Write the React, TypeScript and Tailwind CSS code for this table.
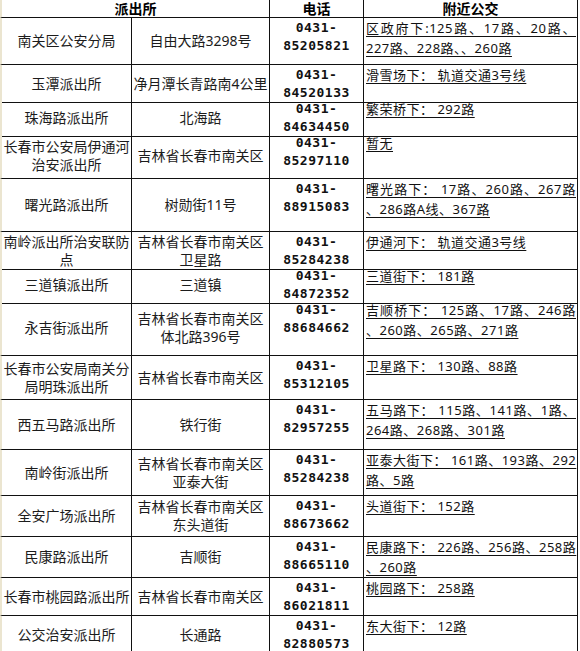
type Row = {
  h: string
  name: string[]
  addr: string[]
  tel: string
  bus: string[]
}

const rows: Row[] = [
  { h: 'h-[47px]', name: ['南关区公安分局'], addr: ['自由大路3298号'], tel: '85205821', bus: ['区政府下:125路、17路、20路、', '227路、228路、、260路'] },
  { h: 'h-[34px]', name: ['玉潭派出所'], addr: ['净月潭长青路南4公里'], tel: '84520133', bus: ['滑雪场下： 轨道交通3号线'] },
  { h: 'h-[34px]', name: ['珠海路派出所'], addr: ['北海路'], tel: '84634450', bus: ['繁荣桥下： 292路'] },
  { h: 'h-[46px]', name: ['长春市公安局伊通河', '治安派出所'], addr: ['吉林省长春市南关区'], tel: '85297110', bus: ['暂无'] },
  { h: 'h-[53px]', name: ['曙光路派出所'], addr: ['树勋街11号'], tel: '88915083', bus: ['曙光路下： 17路、260路、267路', '、286路A线、367路'] },
  { h: 'h-[34px]', name: ['南岭派出所治安联防', '点'], addr: ['吉林省长春市南关区', '卫星路'], tel: '85284238', bus: ['伊通河下： 轨道交通3号线'] },
  { h: 'h-[34px]', name: ['三道镇派出所'], addr: ['三道镇'], tel: '84872352', bus: ['三道街下： 181路'] },
  { h: 'h-[56px]', name: ['永吉街派出所'], addr: ['吉林省长春市南关区', '体北路396号'], tel: '88684662', bus: ['吉顺桥下： 125路、17路、246路', '、260路、265路、271路'] },
  { h: 'h-[44px]', name: ['长春市公安局南关分', '局明珠派出所'], addr: ['吉林省长春市南关区'], tel: '85312105', bus: ['卫星路下： 130路、88路'] },
  { h: 'h-[50px]', name: ['西五马路派出所'], addr: ['铁行街'], tel: '82957255', bus: ['五马路下： 115路、141路、1路、', '264路、268路、301路'] },
  { h: 'h-[46px]', name: ['南岭街派出所'], addr: ['吉林省长春市南关区', '亚泰大街'], tel: '85284238', bus: ['亚泰大街下： 161路、193路、292', '路、5路'] },
  { h: 'h-[41px]', name: ['全安广场派出所'], addr: ['吉林省长春市南关区', '东头道街'], tel: '88673662', bus: ['头道街下： 152路'] },
  { h: 'h-[41px]', name: ['民康路派出所'], addr: ['吉顺街'], tel: '88665110', bus: ['民康路下： 226路、256路、258路', '、260路'] },
  { h: 'h-[38px]', name: ['长春市桃园路派出所'], addr: ['吉林省长春市南关区'], tel: '86021811', bus: ['桃园路下： 258路'] },
  { h: 'h-[34px]', name: ['公交治安派出所'], addr: ['长通路'], tel: '82880573', bus: ['东大街下： 12路'] },
]

const grid = 'grid grid-cols-[132px_138px_94px_214px]'
const cjk = "font-['Noto_Sans','Noto_Sans_CJK_SC',sans-serif]"

function Lines({ lines }: { lines: string[] }) {
  return (
    <div className="text-center text-[14px] leading-[18px] text-[#1c1c1c]">
      {lines.map((l) => (
        <div key={l} className="whitespace-nowrap">
          {l}
        </div>
      ))}
    </div>
  )
}

export default function App() {
  return (
    <div className={`w-[580px] h-[651px] bg-white ${cjk}`}>
      <div className="w-[578px]">
        <div className={`${grid} h-[18px] font-bold text-[14px] leading-[17px] text-black`}>
          <div className="col-span-2 flex items-center justify-center border-l-2 border-l-[#ebe5d0] border-r border-b border-[#111]">
            派出所
          </div>
          <div className="flex items-center justify-center border-r border-b border-[#111]">电话</div>
          <div className="flex items-center justify-center border-r border-b border-[#111]">附近公交</div>
        </div>

        {rows.map((r, i) => (
          <div key={i} className={`${grid} ${r.h}`}>
            <div className="flex items-center justify-center overflow-visible border-l-2 border-l-[#ebe5d0] border-r border-b border-[#111]">
              <Lines lines={r.name} />
            </div>
            <div className="flex items-center justify-center overflow-visible border-r border-b border-[#111]">
              <Lines lines={r.addr} />
            </div>
            <div className="pt-px border-r border-b border-[#111] text-center font-['DejaVu_Sans_Mono',monospace] font-bold text-[13px] tracking-[0.5px] leading-[18px] text-[#111]">
              <div>0431-</div>
              <div>{r.tel}</div>
            </div>
            <div className="pl-[2px] pr-px border-r border-b border-[#111] text-[13px] leading-[20px] tracking-[0.5px] text-[#111]">
              {r.bus.map((l, j) => (
                <div
                  key={j}
                  className={`whitespace-nowrap ${r.bus.length > 1 && j === 0 ? 'text-justify [text-align-last:justify]' : ''}`}
                >
                  <span className="underline underline-offset-[3px] decoration-1">{l}</span>
                </div>
              ))}
            </div>
          </div>
        ))}
      </div>
    </div>
  )
}
